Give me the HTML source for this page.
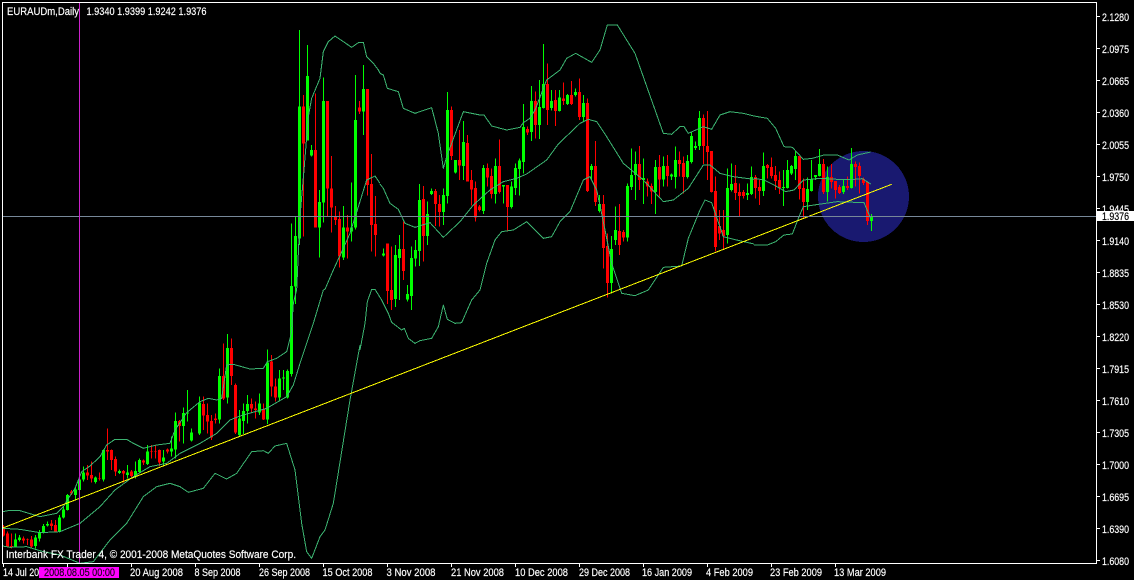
<!DOCTYPE html>
<html><head><meta charset="utf-8"><title>EURAUDm,Daily</title>
<style>
html,body{margin:0;padding:0;background:#000;width:1134px;height:580px;overflow:hidden}
svg{display:block;position:absolute;left:0;top:0}
text{font-family:"Liberation Sans",sans-serif;font-size:11px;fill:#fff;stroke:#fff;stroke-width:.18}
.gw,.rw,.gb,.rb,.b{fill:none}
.gw{stroke:#0f0;stroke-width:3}
.rw{stroke:#f00;stroke-width:3}
.gb{stroke:#0f0;stroke-width:9}
.rb{stroke:#f00;stroke-width:9}
.b{stroke:#3cb371;stroke-width:3;stroke-linejoin:round}
.c{shape-rendering:crispEdges}
</style></head><body>
<svg width="1134" height="580" viewBox="0 0 1134 580" xmlns="http://www.w3.org/2000/svg">
<rect width="1134" height="580" fill="#000"/>
<circle cx="863.5" cy="196.5" r="45.5" fill="#191970" class="c"/>

<!-- candles 0-71 -->
<g transform="translate(0 290) scale(.33333)" class="c">
<path class="rw" d="M10.5 705V740M22.5 725V772M34.5 730V775M70.5 740V760M82.5 745V765M94.5 738V772M154.5 690V720M166.5 690V728M214.5 600V615M262.5 525V570M274.5 515V578M298.5 548V572M322.5 415V510M334.5 478V540M346.5 500V558M370.5 540V578M394.5 540V565M430.5 508V525M454.5 465V505M466.5 465V505M478.5 478V528M502.5 475V490M538.5 390V455M610.5 320V420M622.5 340V430M634.5 375V450M646.5 370V400M670.5 160V330M694.5 145V285M706.5 280V432M754.5 325V368M766.5 335V385M790.5 340V390M814.5 195V320M826.5 265V335"/>
<path class="rb" d="M10.5 715V737M22.5 730V770M34.5 768V772M70.5 745V752M82.5 748V750M94.5 748V770M154.5 700V708M166.5 705V725M214.5 605V610M262.5 548V556M274.5 555V565M298.5 564V566M322.5 480V484M334.5 480V510M346.5 507V545M370.5 543V550M394.5 544V558M430.5 511V518M454.5 483V485M466.5 483V485M478.5 480V518M502.5 478V484M538.5 393V408M610.5 342V377M622.5 375V395M634.5 393V442M646.5 385V390M670.5 258V325M694.5 174V258M706.5 285V428M754.5 342V355M766.5 355V360M790.5 358V388M814.5 215V290M826.5 290V322"/>
<path class="gw" d="M46.5 730V772M58.5 735V755M106.5 735V775M118.5 720V755M130.5 702V730M142.5 695V710M178.5 675V728M190.5 650V685M202.5 612V662M226.5 590V630M238.5 565V605M250.5 530V575M286.5 560V580M310.5 478V575M358.5 538V552M382.5 525V565M406.5 515V565M418.5 505V550M442.5 465V525M490.5 480V530M514.5 440V500M526.5 368V505M550.5 352V460M562.5 300V395M574.5 415V455M598.5 320V435M658.5 235V400M682.5 132V340M718.5 360V438M730.5 340V432M742.5 315V400M778.5 310V375M802.5 178V402M838.5 240V335M850.5 240V300M862.5 238V325"/>
<path class="gb" d="M46.5 748V770M58.5 742V750M106.5 742V768M118.5 727V745M130.5 708V728M142.5 702V706M178.5 682V726M190.5 658V682M202.5 615V660M226.5 598V615M238.5 568V600M250.5 548V568M286.5 563V576M310.5 480V568M358.5 543V549M382.5 547V555M406.5 543V558M418.5 510V546M442.5 484V522M490.5 502V515M514.5 475V485M526.5 393V478M550.5 369V408M562.5 367V370M574.5 428V452M598.5 338V430M658.5 258V388M682.5 174V322M718.5 385V435M730.5 363V393M742.5 342V363M778.5 340V368M802.5 217V388M838.5 265V322M850.5 262V265M862.5 243V322"/>
</g>

<!-- candles 72-94 -->
<g transform="scale(.33333)" class="c">
<path class="rw" d="M910.5 285V710M946.5 280V683M982.5 303V650M994.5 468V698M1006.5 618V675M1018.5 635V803M1042.5 645V776M1078.5 303V342M1102.5 267V587M1114.5 462V755M1126.5 588V770"/>
<path class="rb" d="M910.5 320V430M946.5 450V683M982.5 303V566M994.5 565V623M1006.5 650V660M1018.5 657V770M1042.5 682V695M1078.5 323V335M1102.5 267V555M1114.5 552V675M1126.5 672V705"/>
<path class="gw" d="M874.5 670V1130M886.5 650V912M898.5 90V735M922.5 135V422M934.5 435V470M958.5 570V773M970.5 232V668M1030.5 618V780M1054.5 548V725M1066.5 225V688M1090.5 195V405"/>
<path class="gb" d="M874.5 858V1122M886.5 708V860M898.5 320V715M922.5 228V422M934.5 450V466M958.5 606V683M970.5 303V608M1030.5 682V773M1054.5 682V695M1066.5 360V683M1090.5 267V335"/>
</g>

<!-- candles 95-189 -->
<g transform="translate(380 20) scale(.33333)" class="c">
<path class="rw" d="M22.5 670V852M34.5 680V870M70.5 605V780M130.5 498V725M166.5 507V618M178.5 525V620M214.5 260V420M238.5 330V480M262.5 345V485M274.5 450V556M286.5 485V605M298.5 555V575M322.5 430V500M334.5 445V535M358.5 358V520M382.5 495V633M442.5 320V345M466.5 215V355M502.5 130V315M526.5 210V318M550.5 188V255M574.5 183V255M598.5 175V300M622.5 235V516M646.5 363V558M670.5 525V745M682.5 640V832M718.5 552V705M730.5 630V665M778.5 378V510M802.5 475V530M814.5 490V552M838.5 405V530M862.5 405V500M898.5 395V470M910.5 410V520M970.5 283V432M982.5 273V480M994.5 393V518M1006.5 470V695M1018.5 570V660M1030.5 570V690M1066.5 435V540M1078.5 490V588M1090.5 510V535M1126.5 465V535M1138.5 480V555"/>
<path class="rb" d="M22.5 670V813M34.5 810V840M70.5 687V753M130.5 537V648M166.5 513V552M178.5 552V576M214.5 270V408M238.5 420V437M262.5 369V484M274.5 480V508M286.5 504V592M298.5 560V570M322.5 444V472M334.5 468V522M358.5 438V516M382.5 495V561M442.5 327V337M466.5 243V315M502.5 192V270M526.5 240V273M550.5 235V243M574.5 225V252M598.5 216V291M622.5 249V513M646.5 438V546M670.5 552V684M682.5 678V789M718.5 633V675M730.5 636V652M778.5 432V480M802.5 485V500M814.5 498V515M838.5 441V478M862.5 438V468M898.5 420V432M910.5 429V471M970.5 294V378M982.5 378V396M994.5 393V516M1006.5 513V681M1018.5 618V640M1030.5 630V648M1066.5 489V519M1078.5 516V528M1090.5 516V528M1126.5 471V504M1138.5 501V513"/>
<path class="gw" d="M10.5 685V710M46.5 675V861M58.5 645V840M82.5 795V845M94.5 680V870M106.5 660V740M118.5 492V738M142.5 545V675M154.5 505V525M190.5 505V615M202.5 216V550M226.5 420V460M250.5 303V480M310.5 435V582M346.5 415V550M370.5 495V550M394.5 485V565M406.5 430V525M418.5 415V527M430.5 252V460M454.5 198V363M478.5 180V357M490.5 72V265M514.5 210V272M538.5 210V275M562.5 222V255M586.5 205V230M610.5 225V305M634.5 432V480M658.5 525V578M694.5 648V820M706.5 560V675M742.5 490V665M754.5 385V510M766.5 395V540M790.5 415V552M826.5 420V582M850.5 410V500M874.5 460V480M886.5 380V505M922.5 405V475M934.5 335V430M946.5 365V390M958.5 273V390M1042.5 445V670M1054.5 430V515M1102.5 490V540M1114.5 440V525"/>
<path class="gb" d="M10.5 700V706M46.5 705V837M58.5 687V714M82.5 822V838M94.5 714V828M106.5 690V716M118.5 540V693M142.5 582V648M154.5 513V522M190.5 525V576M202.5 270V528M226.5 420V458M250.5 366V438M310.5 444V573M346.5 438V522M370.5 495V500M394.5 500V561M406.5 444V504M418.5 421V447M430.5 321V426M454.5 243V336M478.5 261V315M490.5 192V264M514.5 243V264M538.5 232V273M562.5 225V252M586.5 216V225M610.5 249V291M634.5 438V450M658.5 552V573M694.5 687V789M706.5 630V660M742.5 498V652M754.5 465V501M766.5 432V465M790.5 474V480M826.5 441V516M850.5 438V478M874.5 464V470M886.5 420V471M922.5 423V471M934.5 348V426M946.5 378V384M958.5 294V378M1042.5 504V645M1054.5 492V510M1102.5 519V525M1114.5 471V522"/>
</g>

<!-- candles 190-217 -->
<g transform="translate(754 90) scale(.33333)" class="c">
<path class="rw" d="M40.5 222V265M52.5 202V265M64.5 228V300M76.5 245V312M136.5 198V328M148.5 265V385M208.5 207V312M232.5 222V295M244.5 273V325M256.5 285V312M280.5 260V300M304.5 215V290M316.5 218V310M328.5 262V285M340.5 276V405"/>
<path class="rb" d="M40.5 225V234M52.5 231V258M64.5 255V273M76.5 270V294M136.5 198V297M148.5 294V336M208.5 222V306M232.5 261V276M244.5 273V300M256.5 291V309M280.5 288V294M304.5 222V231M316.5 228V258M328.5 267V279M340.5 276V393"/>
<path class="gw" d="M28.5 188V318M88.5 240V348M100.5 210V295M112.5 225V255M124.5 185V270M160.5 262V360M172.5 210V305M184.5 255V270M196.5 177V260M220.5 230V335M268.5 270V312M292.5 174V295M352.5 372V423"/>
<path class="gb" d="M28.5 228V303M88.5 291V294M100.5 240V294M112.5 228V250M124.5 198V237M160.5 297V336M172.5 267V303M184.5 255V261M196.5 222V258M220.5 261V306M268.5 288V306M292.5 222V294M352.5 378V393"/>
</g>

<!-- bollinger bands -->
<g transform="translate(0 290) scale(.33333)" class="c">
<polyline class="b" points="8,665 30,661 60,662 120,680 170,670 190,650 202,630 225,595 245,545 270,528 300,500 320,465 345,448 380,448 400,460 430,475 470,465 510,460 525,420 560,368 600,335 625,325 650,330 665,325 680,225 700,223 750,237 790,235 802,215 830,205 860,185 874,130 880,40 890,0"/>
<polyline class="b" points="8,715 60,718 120,728 180,725 240,700 300,650 345,600 400,560 450,530 500,520 540,490 600,460 650,430 690,390 720,378 800,355 860,320 880,285 900,220 940,100 970,0"/>
<polyline class="b" points="8,768 30,772 80,770 130,785 180,795 240,820 280,815 330,750 380,700 430,620 470,590 510,580 540,590 565,607 610,595 645,550 680,567 710,550 755,485 790,482 805,490 825,468 860,460 885,540 905,700 920,785 935,805 960,740 975,720 1000,640 1050,330 1080,165"/>
</g>
<g transform="scale(.33333)" class="c">
<polyline class="b" points="890,870 900,650 912,510 925,350 935,295 960,235 970,155 985,125 1005,108 1030,125 1055,142 1075,128 1090,127 1100,170 1120,190 1135,210 1140,220"/>
<polyline class="b" points="970,870 975,868 1000,810 1030,745 1050,700 1072,630 1100,540 1125,528 1140,550"/>
</g>
<g transform="translate(360 280) scale(.33333)" class="c">
<polyline class="b" points="0,210 15,130 22,65 35,28 45,28 65,60 85,100 95,127 125,150 133,145 145,175 165,190 180,182 215,175 235,140 250,75 262,118 285,130 305,128 335,60 360,30"/>
</g>
<g transform="translate(380 20) scale(.33333)" class="c">
<polyline class="b" points="0,160 10,165 22,205 55,215 70,265 105,280 155,263 175,340 190,445 200,410 215,370 250,275 300,285 312,285 335,318 380,330 420,322 430,308 450,295 465,270 500,180 540,150 560,115 587,100 635,127 660,90 682,15 712,15 765,100 850,340 875,343 900,320 912,320 925,340 970,320 995,328 1020,285 1050,275 1090,280 1122,288"/>
<polyline class="b" points="0,492 10,505 30,550 55,568 75,610 105,622 150,608 190,652 240,605 280,555 330,510 370,485 410,475 440,462 500,420 535,372 600,310 625,298 650,305 680,350 730,430 790,480 850,545 880,540 925,505 970,435 990,435 1020,460 1060,470 1122,478"/>
<polyline class="b" points="300,810 320,730 345,660 365,635 400,630 440,605 490,655 515,650 540,605 570,575 610,480 630,470 650,510 665,580 695,730 725,820 765,827 805,810 850,742 905,738 925,655 960,570 975,540 995,548 1030,650 1070,660 1122,672"/>
</g>
<g transform="translate(754 90) scale(.33333)" class="c">
<polyline class="b" points="0,78 40,85 65,115 90,170 115,172 148,208 175,205 210,195 250,195 285,210 310,195 350,186"/>
<polyline class="b" points="0,265 30,270 60,285 95,305 120,300 148,270 200,265 250,268 300,268 325,266 350,282"/>
<polyline class="b" points="0,465 40,465 65,455 90,435 115,432 135,380 148,350 200,342 250,335 330,338 350,385"/>
</g>

<!-- trend line -->
<line x1="2.7" y1="528" x2="891.7" y2="184.3" stroke="#ff0" stroke-width="1" class="c"/>

<!-- crosshair -->
<rect x="3" y="216" width="1093" height="1" fill="#778899"/>
<rect x="79" y="3" width="1" height="560" fill="#cc22cc"/>

<!-- frame -->
<g fill="#fff">
<rect x="2" y="2" width="1095" height="1"/>
<rect x="2" y="2" width="1" height="562"/>
<rect x="1096" y="2" width="1" height="562"/>
<rect x="2" y="563" width="1095" height="1"/>
<!-- right ticks -->
<path d="M1097 16h3v1h-3zM1097 48h3v1h-3zM1097 80h3v1h-3zM1097 112h3v1h-3zM1097 144h3v1h-3zM1097 176h3v1h-3zM1097 208h3v1h-3zM1097 240h3v1h-3zM1097 272h3v1h-3zM1097 304h3v1h-3zM1097 336h3v1h-3zM1097 368h3v1h-3zM1097 400h3v1h-3zM1097 432h3v1h-3zM1097 464h3v1h-3zM1097 496h3v1h-3zM1097 528h3v1h-3zM1097 560h3v1h-3z"/>
<!-- bottom ticks -->
<path d="M3 564h1v3h-1zM67 564h1v3h-1zM131 564h1v3h-1zM195 564h1v3h-1zM259 564h1v3h-1zM323 564h1v3h-1zM387 564h1v3h-1zM451 564h1v3h-1zM515 564h1v3h-1zM579 564h1v3h-1zM643 564h1v3h-1zM707 564h1v3h-1zM771 564h1v3h-1zM835 564h1v3h-1z"/>
</g>

<!-- header & footer text -->
<text x="7" y="15" textLength="72" lengthAdjust="spacingAndGlyphs">EURAUDm,Daily</text>
<text x="86.5" y="15" textLength="120" lengthAdjust="spacingAndGlyphs">1.9340 1.9399 1.9242 1.9376</text>
<text x="6" y="558" textLength="290" lengthAdjust="spacingAndGlyphs">Interbank FX Trader 4, © 2001-2008 MetaQuotes Software Corp.</text>

<!-- price labels -->
<g>
<text x="1102" y="21" textLength="27" lengthAdjust="spacingAndGlyphs">2.1280</text>
<text x="1102" y="53" textLength="27" lengthAdjust="spacingAndGlyphs">2.0975</text>
<text x="1102" y="85" textLength="27" lengthAdjust="spacingAndGlyphs">2.0665</text>
<text x="1102" y="117" textLength="27" lengthAdjust="spacingAndGlyphs">2.0360</text>
<text x="1102" y="149" textLength="27" lengthAdjust="spacingAndGlyphs">2.0055</text>
<text x="1102" y="181" textLength="27" lengthAdjust="spacingAndGlyphs">1.9750</text>
<text x="1102" y="213" textLength="27" lengthAdjust="spacingAndGlyphs">1.9445</text>
<text x="1102" y="245" textLength="27" lengthAdjust="spacingAndGlyphs">1.9140</text>
<text x="1102" y="277" textLength="27" lengthAdjust="spacingAndGlyphs">1.8835</text>
<text x="1102" y="309" textLength="27" lengthAdjust="spacingAndGlyphs">1.8530</text>
<text x="1102" y="341" textLength="27" lengthAdjust="spacingAndGlyphs">1.8220</text>
<text x="1102" y="373" textLength="27" lengthAdjust="spacingAndGlyphs">1.7915</text>
<text x="1102" y="405" textLength="27" lengthAdjust="spacingAndGlyphs">1.7610</text>
<text x="1102" y="437" textLength="27" lengthAdjust="spacingAndGlyphs">1.7305</text>
<text x="1102" y="469" textLength="27" lengthAdjust="spacingAndGlyphs">1.7000</text>
<text x="1102" y="501" textLength="27" lengthAdjust="spacingAndGlyphs">1.6695</text>
<text x="1102" y="533" textLength="27" lengthAdjust="spacingAndGlyphs">1.6390</text>
<text x="1102" y="565" textLength="27" lengthAdjust="spacingAndGlyphs">1.6080</text>
</g>
<rect x="1097" y="211" width="37" height="10" fill="#fff"/>
<text x="1102" y="220" textLength="27" lengthAdjust="spacingAndGlyphs" style="fill:#000;stroke:#000">1.9376</text>

<!-- date labels -->
<g>
<text x="3" y="576" textLength="46" lengthAdjust="spacingAndGlyphs">14 Jul 2008</text>
<text x="130" y="576" textLength="53" lengthAdjust="spacingAndGlyphs">20 Aug 2008</text>
<text x="194.5" y="576" textLength="46" lengthAdjust="spacingAndGlyphs">8 Sep 2008</text>
<text x="259" y="576" textLength="51" lengthAdjust="spacingAndGlyphs">26 Sep 2008</text>
<text x="322.5" y="576" textLength="50" lengthAdjust="spacingAndGlyphs">15 Oct 2008</text>
<text x="386.5" y="576" textLength="49" lengthAdjust="spacingAndGlyphs">3 Nov 2008</text>
<text x="451" y="576" textLength="53" lengthAdjust="spacingAndGlyphs">21 Nov 2008</text>
<text x="515" y="576" textLength="53" lengthAdjust="spacingAndGlyphs">10 Dec 2008</text>
<text x="579" y="576" textLength="51" lengthAdjust="spacingAndGlyphs">29 Dec 2008</text>
<text x="642" y="576" textLength="50" lengthAdjust="spacingAndGlyphs">16 Jan 2009</text>
<text x="706" y="576" textLength="47" lengthAdjust="spacingAndGlyphs">4 Feb 2009</text>
<text x="770" y="576" textLength="52" lengthAdjust="spacingAndGlyphs">23 Feb 2009</text>
<text x="834" y="576" textLength="52" lengthAdjust="spacingAndGlyphs">13 Mar 2009</text>
</g>
<rect x="39" y="567" width="80" height="11" fill="#f0f"/>
<text x="44" y="576" textLength="71" lengthAdjust="spacingAndGlyphs" style="fill:#1a001a;stroke:#1a001a">2008.08.05 00:00</text>
</svg>
</body></html>
